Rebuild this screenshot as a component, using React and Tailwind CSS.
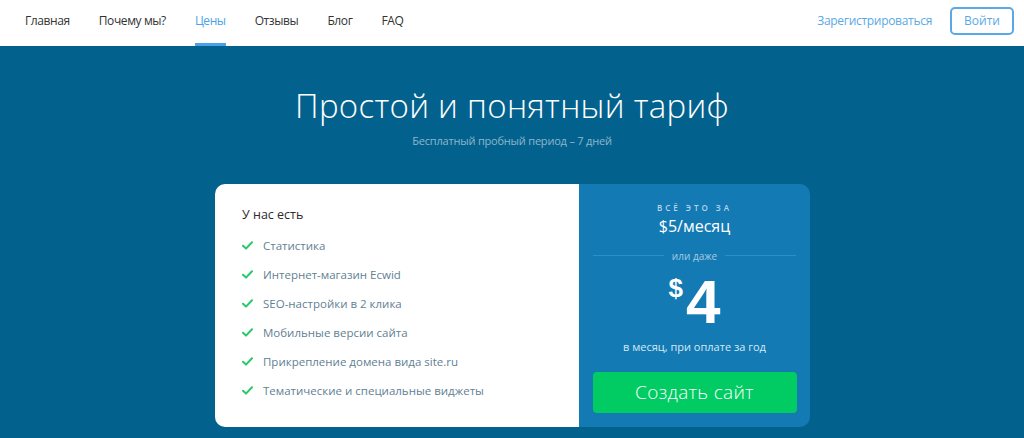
import React from "react";

const navItems = ["Главная", "Почему мы?", "Цены", "Отзывы", "Блог", "FAQ"];

const features = [
  "Статистика",
  "Интернет-магазин Ecwid",
  "SEO-настройки в 2 клика",
  "Мобильные версии сайта",
  "Прикрепление домена вида site.ru",
  "Тематические и специальные виджеты",
];

function Check() {
  return (
    <svg width="11" height="9" viewBox="0 0 11 9" className="shrink-0">
      <path d="M1 4.8 L4 7.6 L10 1.2" fill="none" stroke="#27c96a" strokeWidth="2" strokeLinecap="round" strokeLinejoin="round" />
    </svg>
  );
}

export default function App() {
  return (
    <div className="w-[1024px] h-[438px] overflow-hidden bg-[#03628d]" style={{ fontFamily: '"Open Sans", "Noto Sans", sans-serif' }}>
      {/* шапка */}
      <header className="h-[46px] bg-white flex items-center justify-between pl-[25px] pr-[10px]">
        <nav className="flex h-full items-stretch gap-[29px]">
          {navItems.map((item) => (
            <a
              key={item}
              className={`relative flex items-center pb-[4px] text-[12px] tracking-[-0.4px] ${
                item === "Цены" ? "text-[#4aa3e8]" : "text-[#333]"
              }`}
            >
              {item}
              {item === "Цены" && (
                <span className="absolute left-0 right-0 bottom-0 h-[3px] bg-[#4aa3e8]"></span>
              )}
            </a>
          ))}
        </nav>
        <div className="flex items-center gap-[18px] pb-[4px]">
          <a className="text-[12px] tracking-[-0.3px] text-[#5aa9e6]">Зарегистрироваться</a>
          <button className="w-[64px] h-[28px] rounded-[5px] border-2 border-[#5aa9e6] text-[12px] text-[#5aa9e6]">
            Войти
          </button>
        </div>
      </header>

      {/* заголовок */}
      <div className="flex flex-col items-center pt-[38px]">
        <h1 className="text-[33px] font-light text-white leading-[44px] tracking-[0.3px]">
          Простой и понятный тариф
        </h1>
        <p className="mt-[5px] text-[11px] tracking-[-0.2px] text-[#8db6cc]">Бесплатный пробный период – 7 дней</p>
      </div>

      {/* карточка */}
      <div className="flex justify-center mt-[34px] pl-[1px]">
        <div className="flex w-[595px] h-[243px]">
          <div className="w-[364px] bg-white rounded-l-[10px] pl-[27px] pt-[22px]">
            <div className="text-[12.5px] text-[#2b2b2b]">У нас есть</div>
            <ul className="mt-[12px] flex flex-col gap-[10.5px]">
              {features.map((f) => (
                <li key={f} className="flex items-center gap-[10px] h-[18.5px] text-[11.5px] text-[#5f7f93]">
                  <Check />
                  {f}
                </li>
              ))}
            </ul>
          </div>
          <div className="w-[231px] bg-[#137ab4] rounded-tr-[10px] rounded-br-[10px] flex flex-col items-center pt-[18px] px-[14px]">
            <div className="text-[8px] tracking-[3px] text-[#b3d4ea] uppercase font-semibold">Всё это за</div>
            <div className="text-[16px] text-white leading-[20px] mt-[2px]">$5/месяц</div>
            <div className="flex items-center w-full mt-[14px] gap-[8px]">
              <span className="flex-1 h-px bg-[#2e8fc6]"></span>
              <span className="text-[10px] leading-[12px] text-[#a6cbe2]">или даже</span>
              <span className="flex-1 h-px bg-[#2e8fc6]"></span>
            </div>
            <div className="flex items-start text-white font-bold mt-[13px] h-[54px] font-['Liberation_Sans',sans-serif]">
              <span className="text-[26px] leading-[26px] mr-[3px]">$</span>
              <span className="text-[62px] leading-[54px]">4</span>
            </div>
            <div className="text-[11px] text-[#d7e9f5] mt-[10px]">в месяц, при оплате за год</div>
            <button className="mt-[17px] w-[204px] h-[41px] rounded-[4px] bg-[#00cc63] text-white text-[19px] font-light tracking-[0.3px]">
              Создать сайт
            </button>
          </div>
        </div>
      </div>
    </div>
  );
}
